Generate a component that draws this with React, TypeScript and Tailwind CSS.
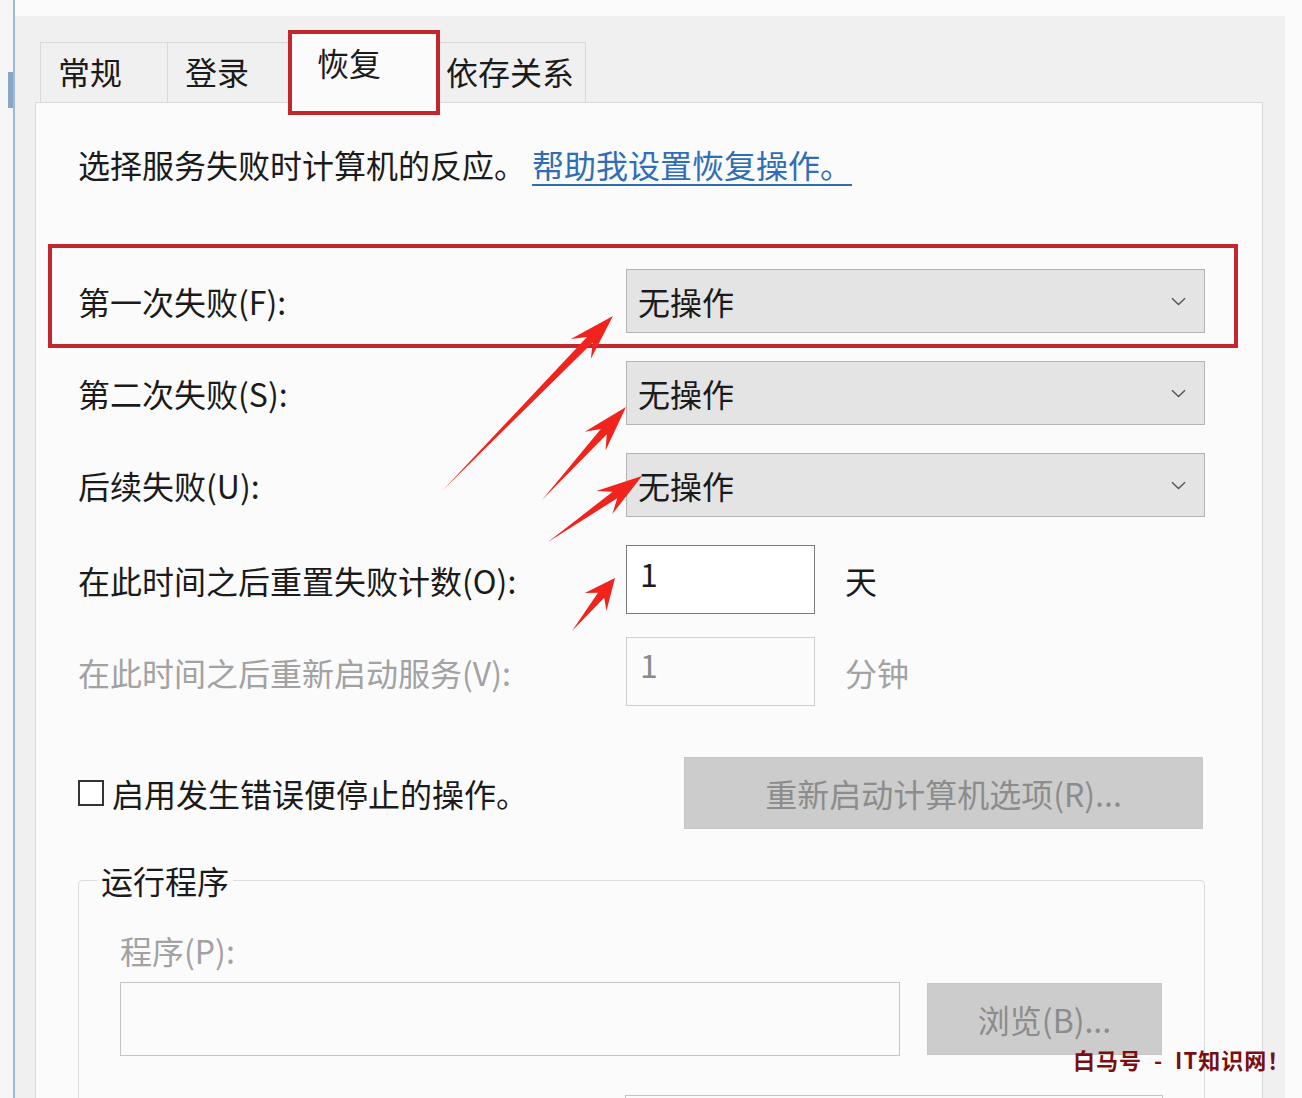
import React from "react";

const font = "font-['Noto_Sans_CJK_SC','Noto_Sans',sans-serif]";

function arrowPoints(x1: number, y1: number, x2: number, y2: number) {
  const dx = x2 - x1;
  const dy = y2 - y1;
  const len = Math.hypot(dx, dy);
  const ux = dx / len;
  const uy = dy / len;
  const nx = -uy;
  const ny = ux;
  const h = Math.min(46, len * 0.45);
  const hw = 14;
  const sw = 4;
  const bx = x2 - ux * h;
  const by = y2 - uy * h;
  const ix = x2 - ux * h * 0.72;
  const iy = y2 - uy * h * 0.72;
  const pts = [
    [x1, y1],
    [ix + nx * sw, iy + ny * sw],
    [bx + nx * hw, by + ny * hw],
    [x2, y2],
    [bx - nx * hw, by - ny * hw],
    [ix - nx * sw, iy - ny * sw],
  ];
  return pts.map((p) => p.join(",")).join(" ");
}

const arrows: [number, number, number, number][] = [
  [443, 490, 613, 316],
  [542, 500, 626, 407],
  [548, 542, 642, 476],
  [572, 631, 615, 578],
];

function Chevron() {
  return (
    <svg width="15" height="9" viewBox="0 0 15 9" className="shrink-0">
      <path d="M1 1.2 L7.5 7.5 L14 1.2" fill="none" stroke="#555" strokeWidth="1.4" />
    </svg>
  );
}

function Dropdown() {
  return (
    <div className="flex h-[64px] w-[579px] items-center justify-between border border-[#b4b4b4] bg-[#e4e4e4] pl-[11px] pr-[18px]">
      <span className="text-[32px] leading-[40px] text-[#1b1b1b]">无操作</span>
      <Chevron />
    </div>
  );
}

function Row({ label, children, className = "" }: { label: string; children: React.ReactNode; className?: string }) {
  return (
    <div className={"flex items-center " + className}>
      <div className="w-[548px] shrink-0 text-[32px] leading-[40px] text-[#1b1b1b]">{label}</div>
      {children}
    </div>
  );
}

export default function App() {
  const tab = "flex h-[60px] items-center border border-b-0 border-[#d9d9d9] bg-[#f0f0f0] pb-[3px] text-[32px] leading-[40px] text-[#1b1b1b]";
  return (
    <div className={"relative flex h-[1098px] w-[1302px] overflow-hidden bg-[#fbfbfb] " + font}>
      {/* left window edge */}
      <div className="flex w-[13px] flex-col bg-[#f6f6f6]">
        <div className="ml-[8px] mt-[72px] h-[36px] w-[5px] bg-[#8aa6c6]" />
      </div>
      <div className="w-[2px] bg-[#9db9dc]" />

      <div className="flex flex-col pt-[16px]">
        <div className="flex h-full w-[1270px] flex-col bg-[#f0f0f0] pl-[20px] pt-[16px]">
          {/* tabs */}
          <div className="ml-[5px] flex items-end">
            <div className={tab + " w-[128px] pl-[17px]"}>常规</div>
            <div className={tab + " w-[122px] border-l-0 pl-[17px]"}>登录</div>
            <div className="relative z-10 -mb-px flex h-[71px] w-[147px] items-center border border-b-0 border-[#d9d9d9] bg-[#fbfbfc] pl-[26px] text-[32px] leading-[40px] text-[#1b1b1b]">
              <span className="-mt-[12px]">恢复</span>
            </div>
            <div className={tab + " w-[149px] border-l-0 pl-[9px]"}>依存关系</div>
          </div>

          {/* panel */}
          <div className="flex w-[1228px] flex-1 flex-col border border-[#d9d9d9] bg-[#fbfbfc] pl-[42px] pt-[41px]">
            <p className="text-[32px] leading-[40px] text-[#1b1b1b]">
              选择服务失败时计算机的反应。
              <span className="ml-[6px] text-[#2f6eb5] underline decoration-[2px] underline-offset-[6px]">帮助我设置恢复操作。</span>
            </p>

            <div className="mt-[85px] flex w-[1127px] flex-col">
              <Row label="第一次失败(F):">
                <Dropdown />
              </Row>
              <Row label="第二次失败(S):" className="mt-[28px]">
                <Dropdown />
              </Row>
              <Row label="后续失败(U):" className="mt-[28px]">
                <Dropdown />
              </Row>
              <Row label="在此时间之后重置失败计数(O):" className="mt-[28px]">
                <div className="h-[69px] w-[189px] border border-[#7a7a7a] bg-white pl-[13px] pt-[7px] text-[32px] leading-[40px] text-[#1b1b1b]">1</div>
                <span className="ml-[30px] text-[32px] leading-[40px] text-[#1b1b1b]">天</span>
              </Row>
              <div className="mt-[23px] flex items-center text-[#a2a2a2]">
                <div className="w-[548px] shrink-0 text-[32px] leading-[40px]">在此时间之后重新启动服务(V):</div>
                <div className="h-[69px] w-[189px] border border-[#cfcfcf] bg-[#fbfbfc] pl-[13px] pt-[6px] text-[32px] leading-[40px] text-[#8a8a8a]">1</div>
                <span className="ml-[30px] text-[32px] leading-[40px]">分钟</span>
              </div>

              <div className="mt-[51px] flex items-center">
                <div className="h-[26px] w-[26px] border-2 border-[#333] bg-white" />
                <span className="ml-[8px] text-[32px] leading-[40px] text-[#1b1b1b]">启用发生错误便停止的操作。</span>
                <div className="ml-auto mr-[2px] flex h-[72px] w-[519px] items-center justify-center border border-[#c6c6c6] bg-[#cccccc] text-[32px] leading-[40px] text-[#8c8c8c]">
                  重新启动计算机选项(R)...
                </div>
              </div>

              <fieldset className="mt-[31px] rounded-[4px] border border-[#dcdcdc] pl-[18px]">
                <legend className="px-[4px] text-[32px] leading-[40px] text-[#1b1b1b]">运行程序</legend>
                <div className="pl-[23px] pt-[30px]">
                  <div className="text-[32px] leading-[40px] text-[#a2a2a2]">程序(P):</div>
                  <div className="mt-[12px] flex items-center">
                    <div className="h-[74px] w-[780px] border border-[#c4c4c4] bg-[#fbfbfc]" />
                    <div className="ml-[27px] flex h-[72px] w-[235px] items-center justify-center border border-[#c6c6c6] bg-[#cccccc] text-[32px] leading-[40px] text-[#8c8c8c]">
                      浏览(B)...
                    </div>
                  </div>
                  <div className="ml-[505px] mt-[39px] h-[70px] w-[538px] border border-[#c4c4c4] bg-[#fbfbfc]" />
                </div>
              </fieldset>
            </div>
          </div>
        </div>
      </div>

      {/* annotations */}
      <div className="absolute left-[288px] top-[30px] z-20 h-[85px] w-[152px] border-[4px] border-[#c4262e]" />
      <div className="absolute left-[48px] top-[244px] z-20 h-[104px] w-[1190px] border-[4px] border-[#c4262e]" />
      <svg className="pointer-events-none absolute left-0 top-0 z-20" width="1302" height="1098" viewBox="0 0 1302 1098">
        {arrows.map((a, i) => (
          <polygon key={i} points={arrowPoints(a[0], a[1], a[2], a[3])} fill="#f0241c" />
        ))}
      </svg>
      <div className="absolute left-[1073px] top-[1045px] z-20 whitespace-pre text-[22px] font-bold leading-[28px] tracking-[1px] text-[#7a0f12]">
        白马号  -  IT知识网！
      </div>
    </div>
  );
}
